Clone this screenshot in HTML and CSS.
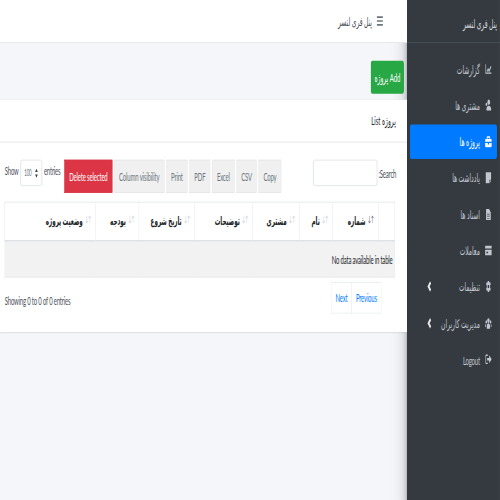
FILE: index.html
```html
<!DOCTYPE html>
<html lang="fa">
<head>
<meta charset="utf-8">
<title>پنل فری لنسر</title>
<link rel="stylesheet" href="styles.css">
</head>
<body>
<div class="stage" dir="rtl">
  <aside class="sidebar">
    <div class="brand">پنل فری لنسر</div>
    <nav class="nav">
      <a class="nav-item"><svg class="ico" viewBox="0 0 20 16"><path d="M1 1h2v12h16v2H1z"/><path d="M5 11l4-5 3 3 5-6 2 2-7 8-3-3-3 3z"/></svg>گزارشات</a>
      <a class="nav-item"><svg class="ico" viewBox="0 0 20 16"><circle cx="11" cy="4" r="4"/><path d="M4 16v-2c0-3 3-5 7-5s7 2 7 5v2z"/><circle cx="4" cy="7" r="2.5"/></svg>مشتری ها</a>
      <a class="nav-item active"><svg class="ico" viewBox="0 0 20 16"><path d="M7 0h6a2 2 0 0 1 2 2v2h3a2 2 0 0 1 2 2v2H0V6a2 2 0 0 1 2-2h3V2a2 2 0 0 1 2-2zm0 2v2h6V2zM0 10h8v2h4v-2h8v4a2 2 0 0 1-2 2H2a2 2 0 0 1-2-2z" fill-rule="evenodd"/></svg>پروژه ها</a>
      <a class="nav-item"><svg class="ico" viewBox="0 0 20 16"><path d="M2 0h16v11h-5v5H2z"/><path d="M14 12h4l-4 4z"/></svg>یادداشت ها</a>
      <a class="nav-item"><svg class="ico" viewBox="0 0 20 16"><path d="M3 0h9l5 5v11H3zM6 7v1h8V7zm0 3v1h8v-1zm0 3v1h8v-1z" fill-rule="evenodd"/></svg>اسناد ها</a>
      <a class="nav-item"><svg class="ico" viewBox="0 0 20 16"><path d="M0 1h20v4H0zM0 7h20v8H0zm4 3v2h5v-2z" fill-rule="evenodd"/></svg>معاملات</a>
      <a class="nav-item"><svg class="ico" viewBox="0 0 20 16"><path d="M8 0h4l.5 2.500 2.500-1 2 3-2 1.500v4l2 1.500-2 3-2.500-1L12 16H8l-.5-2.500-2.500 1-2-3L5 10V6L3 4.500l2-3 2.500 1zM10 5.500a2.500 2.500 0 1 0 0 5 2.500 2.500 0 0 0 0-5z" fill-rule="evenodd"/></svg>تنظیمات<svg class="chev" viewBox="0 0 12 16"><path d="M8 1l3 3-4 4 4 4-3 3-7-7z"/></svg></a>
      <a class="nav-item"><svg class="ico" viewBox="0 0 20 16"><circle cx="10" cy="4" r="3.500"/><circle cx="3.500" cy="6" r="2.500"/><circle cx="16.500" cy="6" r="2.500"/><path d="M5 16v-3c0-3 2-5 5-5s5 2 5 5v3zM0 13c0-2 1-4 3-4v4zM20 13c0-2-1-4-3-4v4z"/></svg>مدیریت کاربران<svg class="chev" viewBox="0 0 12 16"><path d="M8 1l3 3-4 4 4 4-3 3-7-7z"/></svg></a>
      <a class="nav-item"><svg class="ico" viewBox="0 0 20 16"><path d="M8 1H3a2 2 0 0 0-2 2v10a2 2 0 0 0 2 2h5v-2H3V3h5z"/><path d="M12 2l8 6-8 6v-4H6V6h6z"/></svg><span class="latin">Logout</span></a>
    </nav>
  </aside>
  <main class="main">
    <header class="topbar">
      <svg class="burger" viewBox="0 0 20 16"><path d="M1 1h18v2.500H1zM1 6.750h18v2.500H1zM1 12.500h18V15H1z"/></svg>
      <span class="top-title">پنل فری لنسر</span>
    </header>
    <section class="content">
      <div class="toolbar"><a class="add-btn">Add پروژه</a></div>
      <div class="card">
        <div class="card-head">پروژه List</div>
        <div class="card-body">
          <div class="controls">
            <label class="search latin">Search:<span class="search-box"></span></label>
            <div class="buttons">
              <a class="dt-btn">Copy</a>
              <a class="dt-btn">CSV</a>
              <a class="dt-btn">Excel</a>
              <a class="dt-btn">PDF</a>
              <a class="dt-btn">Print</a>
              <a class="dt-btn">Column visibility</a>
              <a class="dt-btn danger">Delete selected</a>
            </div>
            <div class="length latin" dir="ltr">Show <span class="select">100<svg class="updown" viewBox="0 0 10 16"><path d="M5 1l4 5H1zM5 15L1 10h8z"/></svg></span> entries</div>
          </div>
          <table class="grid">
            <colgroup>
              <col class="c1"><col class="c2"><col class="c3"><col class="c4"><col class="c5"><col class="c6"><col class="c7"><col class="c8">
            </colgroup>
            <thead>
              <tr>
                <th></th>
                <th><span class="sort on">↑↓</span>شماره</th>
                <th><span class="sort">↑↓</span>نام</th>
                <th><span class="sort">↑↓</span>مشتری</th>
                <th><span class="sort">↑↓</span>توضیحات</th>
                <th><span class="sort">↑↓</span>تاریخ شروع</th>
                <th><span class="sort">↑↓</span>بودجه</th>
                <th><span class="sort">↑↓</span>وضعیت پروژه</th>
              </tr>
            </thead>
            <tbody>
              <tr><td colspan="8"><span class="latin" dir="ltr">No data available in table</span></td></tr>
            </tbody>
          </table>
          <div class="foot">
            <div class="pager"><a class="page">Previous</a><a class="page">Next</a></div>
            <div class="info latin" dir="ltr">Showing 0 to 0 of 0 entries</div>
          </div>
        </div>
      </div>
    </section>
  </main>
</div>
</body>
</html>
```
FILE: styles.css
```css
html, body {
  margin: 0;
  padding: 0;
  width: 500px;
  height: 500px;
  overflow: hidden;
  background: #f4f6f9;
}
.stage {
  width: 1344px;
  height: 667px;
  margin-right: -844px;
  margin-bottom: -167px;
  display: grid;
  grid-template-columns: 250px 1094px;
  transform: scale(0.372, 0.75);
  transform-origin: 0 0;
  font-family: "Lato", "DejaVu Sans", sans-serif;
  font-size: 16px;
  color: #212529;
}
.latin {
  letter-spacing: -0.5px;
}
.sidebar {
  background: #343a40;
  color: #c2c7d0;
  box-shadow: 0 14px 28px rgba(0,0,0,.25), 0 10px 10px rgba(0,0,0,.22);
}
.brand {
  height: 57px;
  box-sizing: border-box;
  padding: 20px 8px 0 0;
  border-bottom: 1px solid #4b545c;
  line-height: 22px;
  color: rgba(255,255,255,.8);
}
.nav {
  display: flex;
  flex-direction: column;
  gap: 2.4px;
  padding: 12px 8px 0;
}
.nav-item {
  height: 46px;
  display: flex;
  align-items: center;
  gap: 14px;
  padding-right: 14px;
  border-radius: 4px;
}
.nav-item.active {
  background: #007bff;
  color: #fff;
}
.ico {
  width: 18px;
  height: 16px;
  fill: currentColor;
  flex: none;
}
.chev {
  margin-right: auto;
  margin-left: 46px;
  width: 12px;
  height: 16px;
  fill: #e4e6ea;
  flex: none;
}
.main {
  display: flex;
  flex-direction: column;
  min-width: 0;
}
.topbar {
  height: 57px;
  box-sizing: border-box;
  background: #fff;
  border-bottom: 1px solid #dee2e6;
  display: flex;
  align-items: center;
  gap: 12px;
  padding-right: 64px;
}
.burger {
  width: 18px;
  height: 16px;
  fill: #6c757d;
}
.top-title {
  color: #495057;
}
.content {
  flex: 1;
}
.toolbar {
  height: 76px;
  box-sizing: border-box;
  padding: 24px 8px 0 0;
}
.add-btn {
  display: inline-block;
  width: 89px;
  height: 44px;
  box-sizing: border-box;
  background: #28a745;
  color: #fff;
  border-radius: 4px;
  text-align: center;
  line-height: 44px;
}
.card {
  background: #fff;
  box-shadow: 0 0 1px rgba(0,0,0,.125), 0 1px 3px rgba(0,0,0,.2);
  height: 310px;
}
.card-head {
  height: 57px;
  box-sizing: border-box;
  padding: 17px 30px 0 0;
  line-height: 22px;
  border-bottom: 1px solid rgba(0,0,0,.125);
}
.card-body {
  padding: 23px 32px 0 13px;
}
.controls {
  display: flex;
  align-items: flex-start;
  height: 56px;
  margin-right: -3px;
}
.search {
  display: flex;
  gap: 3px;
  line-height: 35px;
  color: #495057;
}
.search-box {
  width: 172px;
  height: 35px;
  box-sizing: border-box;
  border: 1px solid #ced4da;
  border-radius: 4px;
  background: #fff;
}
.buttons {
  display: flex;
  gap: 5px;
  margin-right: 86px;
}
.dt-btn {
  height: 44px;
  box-sizing: border-box;
  padding: 0 12px;
  line-height: 42px;
  letter-spacing: -0.4px;
  background: #f0f0f0;
  border: 1px solid #e4e4e4;
  color: #6c757d;
  white-space: nowrap;
}
.dt-btn.danger {
  background: #dc3545;
  border-color: #dc3545;
  color: #fff;
}
.length {
  margin-right: auto;
  display: flex;
  gap: 5px;
  line-height: 28px;
  color: #495057;
  white-space: nowrap;
}
.select {
  width: 58px;
  height: 35px;
  box-sizing: border-box;
  border: 1px solid #ced4da;
  border-radius: 4px;
  display: flex;
  align-items: center;
  justify-content: center;
  gap: 8px;
  font-size: 12px;
  color: #6c757d;
  background: #fff;
}
.updown {
  width: 10px;
  height: 14px;
  fill: #343a40;
}
.grid {
  width: 1049px;
  table-layout: fixed;
  border-collapse: collapse;
}
.c1 { width: 44px; }
.c2 { width: 123px; }
.c3 { width: 89px; }
.c4 { width: 126px; }
.c5 { width: 156px; }
.c6 { width: 150px; }
.c7 { width: 116px; }
.c8 { width: 245px; }
.grid th {
  height: 51px;
  box-sizing: border-box;
  border: 1px solid #dee2e6;
  border-bottom-width: 2px;
  padding: 0 12px;
  text-align: right;
  font-weight: 700;
  font-size: 15px;
  white-space: nowrap;
}
.sort {
  font-size: 11px;
  font-weight: 400;
  color: #c4c8cc;
  margin-left: 6px;
  vertical-align: 4px;
}
.sort.on {
  color: #495057;
}
.grid td {
  height: 49px;
  box-sizing: border-box;
  background: #f2f2f2;
  border: 1px solid #e6e8ea;
  padding: 0 6px;
  text-align: right;
}
.foot {
  display: flex;
  align-items: flex-start;
  padding-top: 6px;
}
.pager {
  display: flex;
  margin-right: 38px;
}
.page {
  height: 42px;
  box-sizing: border-box;
  padding: 0 11px;
  line-height: 40px;
  letter-spacing: -0.5px;
  border: 1px solid #e8ecef;
  color: #007bff;
  margin-right: -1px;
}
.info {
  margin-right: auto;
  line-height: 48px;
  color: #495057;
}
```
